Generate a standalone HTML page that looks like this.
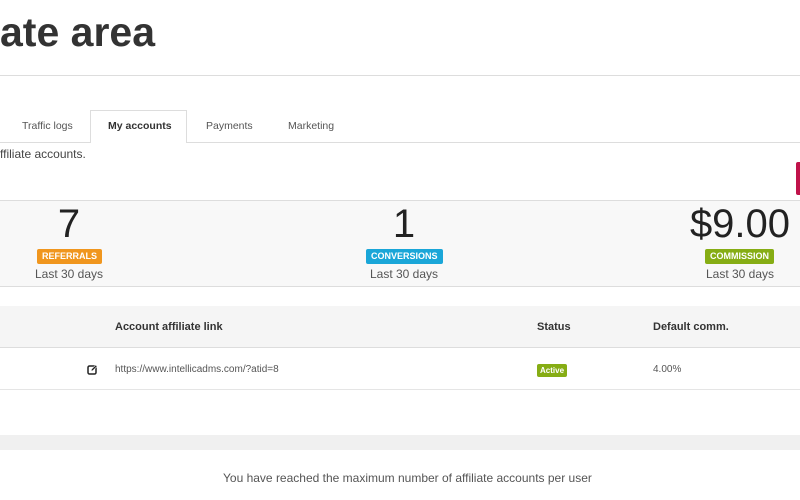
<!DOCTYPE html>
<html><head><style>
*{margin:0;padding:0;box-sizing:border-box}
body{width:800px;height:500px;overflow:hidden;background:#fff;font-family:"Liberation Sans",sans-serif;color:#333;position:relative}
.a{position:absolute}
.lbl{position:absolute;color:#fff;font-size:9px;font-weight:bold;padding:3px 5px;border-radius:2px;line-height:9px}
.st{font-size:12px;color:#555}
</style></head><body>
<div class="a" style="left:0;top:9px;font-size:41px;font-weight:bold;color:#333">ate area</div>
<div class="a" style="left:0;top:75px;width:800px;height:1px;background:#ddd"></div>
<div class="a" style="left:0;top:142px;width:800px;height:1px;background:#ddd"></div>
<div class="a" style="left:90px;top:110px;width:97px;height:33px;border:1px solid #ddd;border-bottom:none;background:#fff"></div>
<div class="a" style="left:22px;top:120px;font-size:10.5px;color:#555">Traffic logs</div>
<div class="a" style="left:108px;top:120px;font-size:10.5px;font-weight:bold;color:#333">My accounts</div>
<div class="a" style="left:206px;top:120px;font-size:10.5px;color:#555">Payments</div>
<div class="a" style="left:288px;top:120px;font-size:10.5px;color:#555">Marketing</div>
<div class="a" style="left:0;top:147px;font-size:12px;color:#444">ffiliate accounts.</div>
<div class="a" style="left:796px;top:162px;width:6px;height:33px;background:#c0124a;border-radius:2px"></div>
<div class="a" style="left:0;top:200px;width:800px;height:87px;background:#f8f8f8;border-top:1px solid #ddd;border-bottom:1px solid #ddd"></div>
<div class="a" style="left:0;top:202px;width:138px;text-align:center;font-size:40px;color:#222">7</div>
<div class="lbl" style="left:37px;top:249px;background:#f0961e">REFERRALS</div>
<div class="a st" style="left:0;top:267px;width:138px;text-align:center">Last 30 days</div>
<div class="a" style="left:304px;top:202px;width:200px;text-align:center;font-size:40px;color:#222">1</div>
<div class="lbl" style="left:366px;top:249px;background:#1aa6d8">CONVERSIONS</div>
<div class="a st" style="left:304px;top:267px;width:200px;text-align:center">Last 30 days</div>
<div class="a" style="left:680px;top:202px;width:120px;text-align:center;font-size:40px;color:#222">$9.00</div>
<div class="lbl" style="left:705px;top:249px;background:#86ad14">COMMISSION</div>
<div class="a st" style="left:680px;top:267px;width:120px;text-align:center">Last 30 days</div>
<div class="a" style="left:0;top:306px;width:800px;height:42px;background:#f5f5f5;border-bottom:1px solid #ddd"></div>
<div class="a" style="left:115px;top:321px;font-size:11px;font-weight:bold">Account affiliate link</div>
<div class="a" style="left:537px;top:321px;font-size:11px;font-weight:bold">Status</div>
<div class="a" style="left:653px;top:321px;font-size:11px;font-weight:bold">Default comm.</div>
<svg class="a" style="left:87px;top:364px" width="11" height="11" viewBox="0 0 11 11"><rect x="1" y="2" width="8" height="8" rx="1.5" fill="none" stroke="#222" stroke-width="1.5"/><path d="M4 7.3l0.6-2.2L8.8 0.9l1.4 1.4-4.2 4.2z" fill="#222" stroke="#fff" stroke-width="0.6"/></svg>
<div class="a" style="left:115px;top:364px;font-size:10px;color:#555">https://www.intellicadms.com/?atid=8</div>
<div class="lbl" style="left:537px;top:364px;background:#86ad14;font-size:8px;padding:2px 3px">Active</div>
<div class="a" style="left:653px;top:364px;font-size:10px;color:#555">4.00%</div>
<div class="a" style="left:0;top:389px;width:800px;height:1px;background:#e5e5e5"></div>
<div class="a" style="left:0;top:435px;width:800px;height:15px;background:#f0f0f0"></div>
<div class="a" style="left:223px;top:471px;font-size:12px;color:#555">You have reached the maximum number of affiliate accounts per user</div>
</body></html>
